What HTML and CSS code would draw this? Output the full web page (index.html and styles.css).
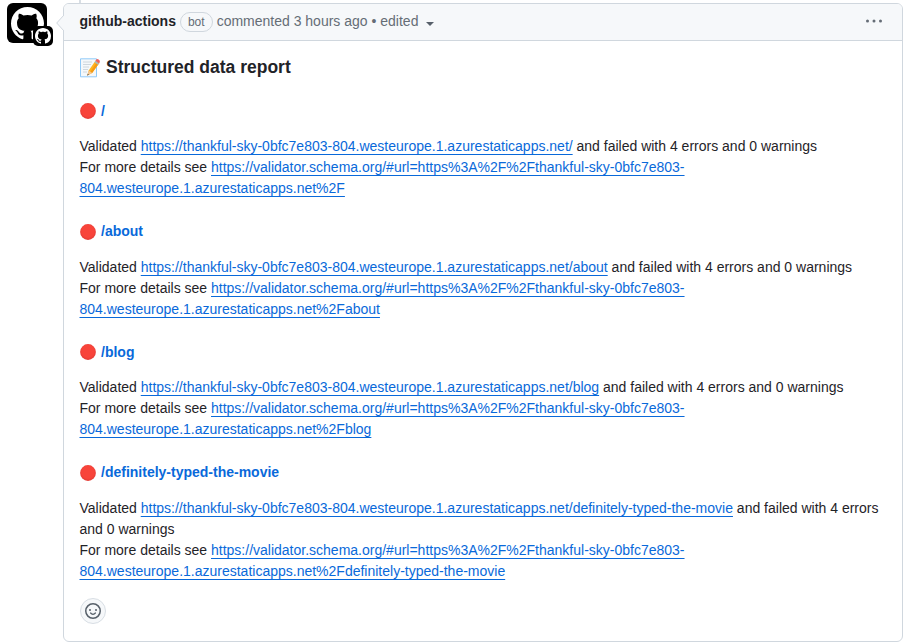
FILE: index.html
```html
<!DOCTYPE html>
<html lang="en">
<head>
<meta charset="utf-8">
<title>Structured data report</title>
<link rel="stylesheet" href="styles.css">
</head>
<body>
<svg class="defs" aria-hidden="true">
  <symbol id="mark" viewBox="0 0 16 16"><path d="M8 0C3.58 0 0 3.58 0 8c0 3.54 2.29 6.53 5.47 7.59.4.07.55-.17.55-.38 0-.19-.01-.82-.01-1.49-2.01.37-2.53-.49-2.69-.94-.09-.23-.48-.94-.82-1.13-.28-.15-.68-.52-.01-.53.63-.01 1.08.58 1.23.82.72 1.21 1.87.87 2.33.66.07-.52.28-.87.51-1.07-1.78-.2-3.64-.89-3.64-3.95 0-.87.31-1.59.82-2.15-.08-.2-.36-1.02.08-2.12 0 0 .67-.21 2.2.82.64-.18 1.32-.27 2-.27s1.36.09 2 .27c1.53-1.04 2.2-.82 2.2-.82.44 1.1.16 1.92.08 2.12.51.56.82 1.27.82 2.15 0 3.07-1.87 3.75-3.65 3.95.29.25.54.73.54 1.48 0 1.07-.01 1.93-.01 2.2 0 .21.15.46.55.38A8.01 8.01 0 0 0 16 8c0-4.42-3.58-8-8-8Z"/></symbol>
  <radialGradient id="red" cx=".5" cy=".45" r=".55"><stop offset=".7" stop-color="#f8443a"/><stop offset="1" stop-color="#e23a34"/></radialGradient>
  <symbol id="dot" viewBox="0 0 16 16"><circle cx="8" cy="8" r="7.9" fill="url(#red)"/></symbol>
</svg>
<main class="timeline">
  <div class="avatar"><svg class="avatar-mark"><use href="#mark"/></svg>
    <span class="avatar-child"><svg class="child-mark"><use href="#mark"/></svg></span>
  </div>
  <article class="comment">
    <header class="head">
      <svg class="caret" viewBox="0 0 8 16"><path d="M8 0 .7 8 8 16" fill="#f6f8fa" stroke="#d0d7de"/></svg>
      <strong class="author">github-actions</strong><span class="label">bot</span><span class="meta">commented 3 hours ago • edited</span><i class="drop"></i>
      <svg class="kebab" viewBox="0 0 16 4"><circle cx="1.5" cy="2" r="1.5"/><circle cx="8" cy="2" r="1.5"/><circle cx="14.5" cy="2" r="1.5"/></svg>
    </header>
    <div class="body">
      <h3><svg class="memo" viewBox="0 0 20 20"><path d="M.5.8h16v18H.5z" fill="#f5f8fa" stroke="#90caf9"/><path d="M3 4h9M3 6.5h8M3 9h6M3 11.500h5M3 14h4" stroke="#c5ced5" stroke-width=".8"/><path d="m7.300 17.500 1.400-5 7-10 3.600 2.500-7.200 10z" fill="#ffb41f"/><path d="m10.400 13.700 7-10.100 1.900 1.400-7.200 10z" fill="#f59a14"/><path d="m8.700 12.500 3.400 2.500-4.800 2.700z" fill="#f3c798"/><path d="m7.800 15.700 1.100.8-1.700 1.300z" fill="#444"/><path d="m14.500 4.200 1-1.500 3.600 2.500-1.100 1.500z" fill="#a5bac5"/><path d="m15.500 2.700.8-1.100q.9-1 2.300 0t1.300 2.400l-.8 1.200z" fill="#f2605b"/></svg>Structured data report</h3>
      <h4><svg class="dot"><use href="#dot"/></svg><a href="#">/</a></h4>
      <p>Validated <a href="#">https://thankful-sky-0bfc7e803-804.westeurope.1.azurestaticapps.net/</a> and failed with 4 errors and 0 warnings<br>For more details see <a href="#">https://validator.schema.org/#url=https%3A%2F%2Fthankful-sky-0bfc7e803-<br>804.westeurope.1.azurestaticapps.net%2F</a></p>
      <h4><svg class="dot"><use href="#dot"/></svg><a href="#">/about</a></h4>
      <p>Validated <a href="#">https://thankful-sky-0bfc7e803-804.westeurope.1.azurestaticapps.net/about</a> and failed with 4 errors and 0 warnings<br>For more details see <a href="#">https://validator.schema.org/#url=https%3A%2F%2Fthankful-sky-0bfc7e803-<br>804.westeurope.1.azurestaticapps.net%2Fabout</a></p>
      <h4><svg class="dot"><use href="#dot"/></svg><a href="#">/blog</a></h4>
      <p>Validated <a href="#">https://thankful-sky-0bfc7e803-804.westeurope.1.azurestaticapps.net/blog</a> and failed with 4 errors and 0 warnings<br>For more details see <a href="#">https://validator.schema.org/#url=https%3A%2F%2Fthankful-sky-0bfc7e803-<br>804.westeurope.1.azurestaticapps.net%2Fblog</a></p>
      <h4><svg class="dot"><use href="#dot"/></svg><a href="#">/definitely-typed-the-movie</a></h4>
      <p>Validated <a href="#">https://thankful-sky-0bfc7e803-804.westeurope.1.azurestaticapps.net/definitely-typed-the-movie</a> and failed with 4 errors<br>and 0 warnings<br>For more details see <a href="#">https://validator.schema.org/#url=https%3A%2F%2Fthankful-sky-0bfc7e803-<br>804.westeurope.1.azurestaticapps.net%2Fdefinitely-typed-the-movie</a></p>
      <button class="react" aria-label="Add reaction"><svg viewBox="0 0 16 16"><path d="M8 0a8 8 0 1 1 0 16A8 8 0 0 1 8 0ZM1.500 8a6.500 6.500 0 1 0 13 0 6.500 6.500 0 0 0-13 0Z"/><circle cx="5" cy="7" r="1"/><circle cx="11" cy="7" r="1"/><path d="M5.750 10.070Q6.600 11.250 8 11.250t2.250-1.180" fill="none" stroke="#57606a" stroke-width="1.500" stroke-linecap="round"/></svg></button>
    </div>
  </article>
</main>
</body>
</html>
```
FILE: styles.css
```css
* { box-sizing: border-box; }
body {
  margin: 0;
  background: #fff;
  color: #1f2328;
  font: 14px/21px "Liberation Sans", Arial, sans-serif;
}
.defs { position: absolute; width: 0; height: 0; }
.timeline {
  display: flex;
  gap: 16px;
  height: 642px;
  padding: 3px 3px 0 7px;
  background: linear-gradient(#d8dee4, #d8dee4) 79px 0 / 2px 3px no-repeat;
}
.avatar {
  position: relative;
  flex: none;
  width: 40px;
  height: 40px;
  border-radius: 6px;
  background: #000;
  fill: #fff;
}
.avatar-mark { display: block; width: 33px; height: 33px; margin: 4px 0 0 3.5px; }
.avatar-child {
  position: absolute;
  left: 26px;
  top: 23px;
  width: 20px;
  height: 20px;
  border-radius: 5px;
  background: #000;
}
.child-mark { display: block; width: 16px; height: 16px; margin: 2px; }
.comment {
  flex: 1;
  height: 639px;
  border: 1px solid #d0d7de;
  border-radius: 6px;
}
.head {
  position: relative;
  display: flex;
  align-items: center;
  height: 37px;
  padding: 0 20px 2px 15.500px;
  border-bottom: 1px solid #d0d7de;
  border-radius: 5px 5px 0 0;
  background: #f6f8fa;
  color: #656d76;
}
.caret { position: absolute; left: -8px; top: 11px; width: 8px; height: 16px; }
.author { color: #1f2328; }
.label {
  height: 20px;
  margin: 1px 4px 0;
  padding: 0 7px;
  border: 1px solid #d0d7de;
  border-radius: 10px;
  font-size: 12px;
  line-height: 18px;
}
.drop {
  margin: 6px 0 0 8px;
  border: 4px solid transparent;
  border-top-color: #57606a;
  border-bottom: 0;
}
.kebab { width: 16px; height: 4px; margin-left: auto; fill: #656d76; }
.body { padding: 16px 15.500px; }
h3, h4, p { margin: 0; }
h3 { display: flex; align-items: center; font-size: 17.500px; line-height: 21px; }
.memo { width: 20px; height: 20px; margin-right: 6.500px; fill: none; }
h3 + h4 { margin-top: 24.500px; }
h4 {
  display: flex;
  align-items: center;
  margin: 24px 0 16px;
  font-size: 14px;
  line-height: 17.500px;
}
.dot { width: 16px; height: 16px; margin: 0 5px 0 .5px; }
a { color: #0969da; text-decoration: none; }
p { white-space: nowrap; }
p a { text-decoration: underline; text-underline-offset: 3px; text-decoration-skip-ink: none; }
.react {
  display: flex;
  align-items: center;
  justify-content: center;
  width: 26px;
  height: 26px;
  margin-top: 16px;
  padding: 0;
  border: 1px solid #d8dee4;
  border-radius: 50%;
  background: #f6f8fa;
}
.react svg { width: 16px; height: 16px; fill: #57606a; }
```
